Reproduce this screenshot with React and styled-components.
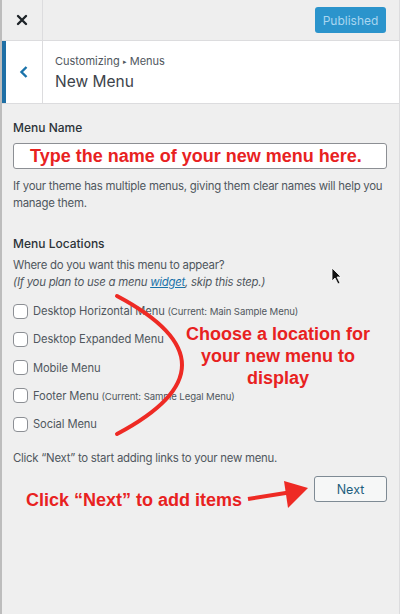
import styled, { createGlobalStyle } from 'styled-components';

const GlobalStyle = createGlobalStyle`
  html, body { margin: 0; padding: 0; }
  body {
    background: #efefef;
    font-family: Inter, "Noto Sans", "Liberation Sans", sans-serif;
    color: #3c434a;
  }
`;

const Panel = styled.div`
  position: relative;
  width: 400px;
  height: 614px;
  box-sizing: border-box;
  border-left: 2px solid #bdbdbd;
  border-right: 1px solid #dcdcde;
  background: #efefef;
  overflow: hidden;
`;

const TopBar = styled.div`
  display: flex;
  align-items: center;
  height: 40px;
  border-bottom: 1px solid #dcdcde;
  background: #eeeeee;
`;

const CloseButton = styled.div`
  width: 40px;
  height: 40px;
  display: flex;
  align-items: center;
  justify-content: center;
  border-right: 1px solid #dcdcde;
  color: #1d2327;
`;

const PublishButton = styled.div`
  margin-left: auto;
  margin-right: 13px;
  width: 71px;
  height: 26px;
  display: flex;
  align-items: center;
  justify-content: center;
  background: #2b94cc;
  border-radius: 3px;
  color: #a9d6f0;
  font-size: 12px;
`;

const Header = styled.div`
  display: flex;
  height: 62px;
  background: #fff;
  border-bottom: 1px solid #dcdcde;
`;

const BackButton = styled.div`
  width: 36px;
  display: flex;
  align-items: center;
  justify-content: center;
  border-left: 4px solid #1f6fa5;
  border-right: 1px solid #dcdcde;
  color: #1a73aa;
`;

const TitleBlock = styled.div`
  display: flex;
  flex-direction: column;
  justify-content: center;
  padding-left: 12px;
  gap: 4px;
`;

const Crumb = styled.div`
  font-size: 11px;
  color: #50575e;
`;

const Sep = styled.span`
  font-size: 7px;
  vertical-align: 1px;
  margin: 0 3px;
`;

const Title = styled.div`
  font-size: 15.5px;
  color: #3c434a;
`;

const Content = styled.div`
  padding: 16px 12px 0 11px;
`;

const Label = styled.div`
  font-size: 12px;
  font-weight: 500;
  color: #2c3338;
  margin-bottom: ${p => p.gap || 6}px;
`;

const Input = styled.div`
  height: 24px;
  border: 1px solid #8c8f94;
  border-radius: 3px;
  background: #fff;
  display: flex;
  align-items: center;
  padding-left: 16px;
`;

const RedNote = styled.span`
  font-family: "Liberation Sans", Arial, sans-serif;
  font-weight: 700;
  font-size: 18px;
  color: #e8221f;
`;

const Description = styled.p`
  margin: ${p => p.top || 0}px 0 0;
  font-size: 11.4px;
  line-height: 17px;
  letter-spacing: -0.25px;
  color: #50575e;
`;

const Section = styled.div`
  margin-top: ${p => p.top}px;
`;

const Italic = styled.span`
  font-style: italic;
`;

const Link = styled.span`
  color: #1a73aa;
  text-decoration: underline;
`;

const LocationList = styled.div`
  display: flex;
  flex-direction: column;
  gap: 12.3px;
  margin-top: 12px;
`;

const LocationRow = styled.label`
  display: flex;
  align-items: center;
  gap: 5px;
  height: 16px;
  font-size: 11.2px;
  letter-spacing: -0.1px;
  color: #50575e;
`;

const Box = styled.span`
  width: 13px;
  height: 13px;
  border: 1px solid #8c8f94;
  border-radius: 4px;
  background: #fff;
  flex-shrink: 0;
`;

const Current = styled.span`
  font-size: 9.6px;
`;

const NextRow = styled.div`
  display: flex;
  justify-content: flex-end;
  margin-top: 9px;
`;

const NextButton = styled.div`
  width: 71px;
  height: 24px;
  display: flex;
  align-items: center;
  justify-content: center;
  border: 1px solid #7e8a94;
  border-radius: 3px;
  background: #f6f7f7;
  color: #1d5e7e;
  font-size: 12.5px;
`;

const Overlay = styled.div`
  position: absolute;
  left: ${p => p.x}px;
  top: ${p => p.y}px;
  text-align: ${p => p.align || 'left'};
  line-height: 22px;
`;

const Drawing = styled.svg`
  position: absolute;
  left: 0;
  top: 0;
  pointer-events: none;
`;

const locations = [
  { name: 'Desktop Horizontal Menu', current: '(Current: Main Sample Menu)' },
  { name: 'Desktop Expanded Menu' },
  { name: 'Mobile Menu' },
  { name: 'Footer Menu', current: '(Current: Sample Legal Menu)' },
  { name: 'Social Menu' },
];

export default function App() {
  return (
    <>
      <GlobalStyle />
      <Panel>
        <TopBar>
          <CloseButton>
            <svg width="12" height="12" viewBox="0 0 12 12">
              <path d="M2 2 L10 10 M10 2 L2 10" stroke="currentColor" strokeWidth="2.4" strokeLinecap="round" />
            </svg>
          </CloseButton>
          <PublishButton>Published</PublishButton>
        </TopBar>
        <Header>
          <BackButton>
            <svg width="10" height="14" viewBox="0 0 10 14">
              <path d="M7.5 2 L2.5 7 L7.5 12" stroke="currentColor" strokeWidth="2.4" fill="none" />
            </svg>
          </BackButton>
          <TitleBlock>
            <Crumb>Customizing<Sep>▸</Sep>Menus</Crumb>
            <Title>New Menu</Title>
          </TitleBlock>
        </Header>
        <Content>
          <Label gap={8}>Menu Name</Label>
          <Input>
            <RedNote>Type the name of your new menu here.</RedNote>
          </Input>
          <Description top={9}>
            If your theme has multiple menus, giving them clear names will help you manage them.
          </Description>
          <Section top={24}>
            <Label gap={6}>Menu Locations</Label>
            <Description>
              Where do you want this menu to appear?<br />
              <Italic>(If you plan to use a menu <Link>widget</Link>, skip this step.)</Italic>
            </Description>
            <LocationList>
              {locations.map(loc => (
                <LocationRow key={loc.name}>
                  <Box />
                  <span>
                    {loc.name}
                    {loc.current && <Current> {loc.current}</Current>}
                  </span>
                </LocationRow>
              ))}
            </LocationList>
          </Section>
          <Description top={18}>Click “Next” to start adding links to your new menu.</Description>
          <NextRow>
            <NextButton>Next</NextButton>
          </NextRow>
        </Content>

        <Overlay x={184} y={323} align="center">
          <RedNote>Choose a location for<br />your new menu to<br />display</RedNote>
        </Overlay>
        <Overlay x={24} y={489}>
          <RedNote>Click “Next” to add items</RedNote>
        </Overlay>
        <Drawing width="400" height="614" viewBox="0 0 400 614">
          <path d="M115 296 Q 245 365 115 434" stroke="#ee2a24" strokeWidth="4" fill="none" strokeLinecap="round" />
          <path d="M246 499 L290 492" stroke="#ee2a24" strokeWidth="4" fill="none" />
          <path d="M282 481 L306 488 L286 508 Z" fill="#ee2a24" />
          <path d="M330 268 L330 281 L333 278 L336 284 L338 283 L335 277 L339 277 Z" fill="#111" stroke="#fff" strokeWidth="0.8" />
        </Drawing>
      </Panel>
    </>
  );
}
